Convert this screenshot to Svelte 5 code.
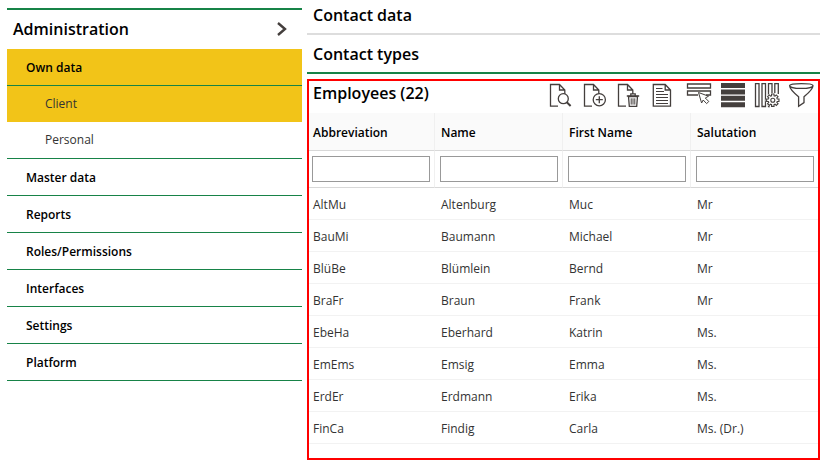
<script lang="ts">
  type Row = [string, string, string, string];

  const sections = ['Master data', 'Reports', 'Roles/Permissions', 'Interfaces', 'Settings', 'Platform'];
  const columns = ['Abbreviation', 'Name', 'First Name', 'Salutation'];
  const rows: Row[] = [
    ['AltMu', 'Altenburg', 'Muc', 'Mr'],
    ['BauMi', 'Baumann', 'Michael', 'Mr'],
    ['BlüBe', 'Blümlein', 'Bernd', 'Mr'],
    ['BraFr', 'Braun', 'Frank', 'Mr'],
    ['EbeHa', 'Eberhard', 'Katrin', 'Ms.'],
    ['EmEms', 'Emsig', 'Emma', 'Ms.'],
    ['ErdEr', 'Erdmann', 'Erika', 'Ms.'],
    ['FinCa', 'Findig', 'Carla', 'Ms. (Dr.)'],
  ];

  let filters = $state(['', '', '', '']);
  const visible = $derived(
    rows.filter((row) => row.every((cell, i) => cell.toLowerCase().includes(filters[i].toLowerCase())))
  );

  // Outline of the settings gear: eight teeth around (20.8, 19.2)
  const gear =
    Array.from({ length: 8 }, (_, i) => {
      const base = (i * Math.PI) / 4;
      return [
        [-0.27, 4.6],
        [-0.2, 6.3],
        [0.2, 6.3],
        [0.27, 4.6],
      ]
        .map(([a, r], j) => {
          const x = 20.8 + r * Math.sin(base + a);
          const y = 19.2 - r * Math.cos(base + a);
          return `${i + j === 0 ? 'M' : 'L'}${x.toFixed(2)} ${y.toFixed(2)}`;
        })
        .join('');
    }).join('') + 'Z';
</script>

{#snippet page()}
  <path d="M10 25.2H2.5V3.5H11.5L16.8 9V13M11.5 3.5V9H16.8" />
{/snippet}

<div class="layout">
  <nav class="sidebar" aria-label="Administration">
    <button class="menu-title" type="button">
      Administration
      <svg class="chevron" viewBox="0 0 12 16"><path d="M2 2L9 8L2 14" /></svg>
    </button>
    <ul>
      <li class="section active">
        <a href="#own-data">Own data</a>
      </li>
      <li class="sub active"><a href="#client">Client</a></li>
      <li class="sub last"><a href="#personal">Personal</a></li>
      {#each sections as section}
        <li class="section"><a href={'#' + section}>{section}</a></li>
      {/each}
    </ul>
  </nav>

  <main>
    <h2 class="panel-title">Contact data</h2>
    <h2 class="panel-title open">Contact types</h2>

    <section class="employees">
      <header>
        <h2>Employees (22)</h2>
        <div class="toolbar">
          <button type="button" aria-label="View">
            <svg viewBox="0 0 28 28">
              {@render page()}
              <circle cx="15.3" cy="17.7" r="5" fill="#fff" />
              <path d="M18.8 21.2L22.6 25" stroke-width="2" />
            </svg>
          </button>
          <button type="button" aria-label="Add">
            <svg viewBox="0 0 28 28">
              {@render page()}
              <circle cx="17.3" cy="18.7" r="6.1" fill="#fff" />
              <path d="M17.3 15.2V22.2M13.8 18.7H20.8" />
            </svg>
          </button>
          <button type="button" aria-label="Delete">
            <svg viewBox="0 0 28 28">
              {@render page()}
              <path d="M12.5 15.5L13.3 25.3H20.7L21.5 15.5Z" fill="#fff" />
              <path d="M10.8 15H23.2M14.8 15V12.8H19.2V15" />
              <path d="M15.2 17.3V23.6M17 17.3V23.6M18.8 17.3V23.6" stroke-width="1" />
            </svg>
          </button>
          <button type="button" aria-label="Report">
            <svg viewBox="0 0 28 28">
              <path d="M3.3 3.5H15.2L20.5 9V25.2H3.3ZM15.2 3.5V9H20.5" />
              <path d="M6 7.5H12.5M6 10.5H14M6 13.5H18M6 16.5H18M6 19.5H18M6 22.5H18" stroke-width="1" />
            </svg>
          </button>
          <button type="button" aria-label="Select rows">
            <svg viewBox="0 0 28 28">
              <path d="M3.5 3H26.5V7H3.5ZM14 14H3.5V10H26.5V14H22" />
              <path
                d="M14.5 11.5L24.5 15.2L21.3 17L24.8 20.5L22.6 22.6L19.2 19L17.6 22Z"
                fill="#fff"
                stroke-width="1"
              />
            </svg>
          </button>
          <button type="button" aria-label="Rows">
            <svg viewBox="0 0 28 28">
              <path class="solid" d="M3 2H27V7H3ZM3 8.4H27V13.4H3ZM3 14.8H27V19.8H3ZM3 21.2H27V26.2H3Z" />
            </svg>
          </button>
          <button type="button" aria-label="Column settings">
            <svg viewBox="0 0 28 28">
              <path d="M3.5 2.7H7V25.5H3.5ZM10 2.7H13.5V25.5H10ZM20 12V2.7H16.5V25.5H18M26.3 13V2.7H22.8V12" />
              <circle cx="20.8" cy="19.2" r="7.2" fill="#fff" stroke="none" />
              <path d={gear} fill="#fff" stroke-width="1.1" />
              <circle cx="20.8" cy="19.2" r="2" stroke-width="1.1" />
            </svg>
          </button>
          <button type="button" aria-label="Filter">
            <svg viewBox="0 0 28 28">
              <path
                d="M3.6 4.7C3.6 6 8 7.4 15.3 7.4S27 6 27 4.7S22.6 2.6 15.3 2.6S3.6 3.4 3.6 4.7ZM3.6 4.7C3.8 8.5 8.5 12.3 12.6 15.7V25.3L18 21.6V15.7C22 12.3 26.8 8.5 27 4.7"
              />
            </svg>
          </button>
        </div>
      </header>

      <div class="table-wrap">
        <table>
          <thead>
            <tr class="names">
              {#each columns as column, i}
                <th scope="col" id={'col-' + i}>{column}</th>
              {/each}
            </tr>
            <tr class="filters">
              {#each columns as column, i}
                <td><input type="text" aria-labelledby={'col-' + i} bind:value={filters[i]} /></td>
              {/each}
            </tr>
          </thead>
          <tbody>
            {#each visible as row}
              <tr>
                {#each row as cell}
                  <td>{cell}</td>
                {/each}
              </tr>
            {/each}
          </tbody>
        </table>
      </div>
    </section>
  </main>
</div>

<style>
  :global(body) {
    background: #fff;
  }

  .layout {
    display: grid;
    grid-template-columns: 295fr 513fr;
    gap: 5px;
    padding-left: 7px;
    min-height: 100vh;
    box-sizing: border-box;
    font-family: 'Open Sans', 'Noto Sans', sans-serif;
    font-size: 12px;
    line-height: 16px;
    color: #333;
  }

  button {
    padding: 0;
    border: 0;
    background: none;
    font: inherit;
    cursor: pointer;
  }

  svg {
    display: block;
    fill: none;
    stroke: #443f3d;
    stroke-width: 1.3;
  }

  .solid {
    fill: #443f3d;
    stroke: none;
  }

  .sidebar {
    padding-top: 8px;
  }

  .menu-title {
    display: flex;
    align-items: center;
    justify-content: space-between;
    width: 100%;
    height: 41px;
    padding: 0 14px 2px 6px;
    border-top: 2px solid #178347;
    box-sizing: border-box;
    font-size: 16px;
    font-weight: 600;
    color: #000;
  }

  .chevron {
    width: 12px;
    height: 16px;
    stroke-width: 2.4;
  }

  ul {
    margin: 0;
    padding: 0;
    list-style: none;
  }

  li a {
    display: block;
    color: inherit;
    text-decoration: none;
  }

  .section {
    border-bottom: 1px solid #178347;
    font-weight: 600;
    color: #000;
  }

  .section a {
    padding: 11px 19px 9px;
  }

  .sub a {
    padding: 10px 38px;
  }

  .active {
    background: #f2c418;
  }

  .last {
    border-bottom: 1px solid #178347;
  }

  main {
    display: flex;
    flex-direction: column;
    min-width: 0;
  }

  h2 {
    margin: 0;
    font-size: 16px;
    line-height: 24px;
    font-weight: 600;
    color: #000;
  }

  .panel-title {
    padding: 3px 6px 6px;
    border-bottom: 2px solid #ddd;
  }

  .panel-title.open {
    padding: 7px 6px 6px;
    border-color: #178347;
  }

  .employees {
    flex: 1;
    margin-top: 5px;
    border: 2px solid #f00;
  }

  header {
    display: flex;
    align-items: flex-start;
    justify-content: space-between;
    height: 32px;
    padding: 0 4px;
  }

  .toolbar {
    display: flex;
    gap: 6px;
  }

  .toolbar svg {
    width: 28px;
    height: 28px;
  }

  .table-wrap {
    overflow: hidden;
  }

  table {
    width: calc(100% + 3px);
    margin-left: -2px;
    border-collapse: separate;
    border-spacing: 0;
    table-layout: fixed;
  }

  th,
  td {
    padding: 2px 6px 0;
    text-align: left;
    border-bottom: 1px solid #f2f2f2;
  }

  th {
    height: 35px;
    background: #fafafa;
    border-right: 1px solid #f0f0f0;
    border-bottom-color: #d8d8d8;
    font-weight: 600;
    color: #000;
  }

  tbody td {
    height: 29px;
  }

  .filters td {
    height: 36px;
    padding: 0 4px 0 5px;
    border-right: 1px solid #f0f0f0;
    border-bottom-color: #d8d8d8;
  }

  input {
    display: block;
    width: 100%;
    height: 26px;
    padding: 0 4px;
    border: 1px solid #999;
    box-sizing: border-box;
    font: inherit;
  }
</style>
